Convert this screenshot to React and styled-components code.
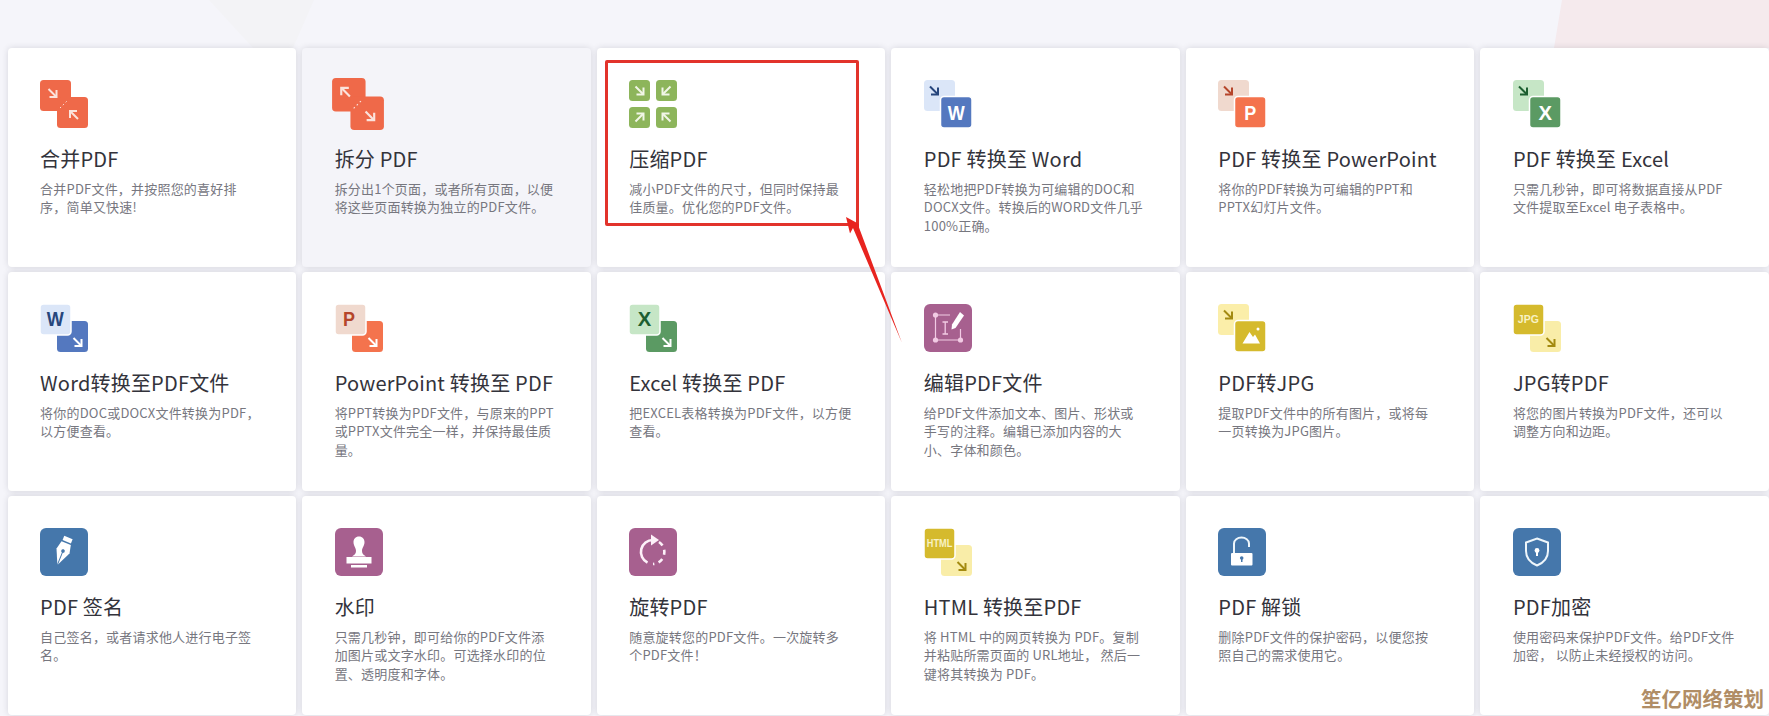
import styled, { createGlobalStyle } from "styled-components";

const GlobalStyle = createGlobalStyle`
  html, body {
    margin: 0;
    padding: 0;
    background: #f5f5fa;
  }
`;

const Arrow = ({ x, y, rot = 0, color = "#fff", size = 1 }) => (
  <g
    transform={`translate(${x} ${y}) rotate(${rot}) scale(${size})`}
    fill="none"
    stroke={color}
    strokeWidth="2"
  >
    <path d="M-4 -4L3.5 3.5" />
    <path d="M4 -3V4H-3" />
  </g>
);

const Square = ({ x, y, size = 31, color, outline }) => (
  <rect
    x={x}
    y={y}
    width={size}
    height={size}
    rx="3.5"
    fill={color}
    stroke={outline ? "#fff" : "none"}
    strokeWidth={outline ? 1.5 : 0}
  />
);

// the letters on the icons are narrower than any installed bold, so squeeze them
const Letter = ({ x, y, size = 20, width, color = "#fff", children }) => (
  <text
    x={x}
    y={y}
    textAnchor="middle"
    fontFamily="'Liberation Sans', sans-serif"
    fontWeight="700"
    fontSize={size}
    fill={color}
    textLength={width}
    lengthAdjust="spacingAndGlyphs"
  >
    {children}
  </text>
);

const Glyph = ({ children }) => (
  <svg width="48" height="48" viewBox="0 0 48 48">
    {children}
  </svg>
);

const MergeIcon = () => (
  <Glyph>
    <Square x={0} y={0} color="#ef6949" />
    <Square x={17} y={17} color="#ef6949" />
    <Arrow x={12.5} y={13} color="#fbe3dc" />
    <Arrow x={34} y={35} rot={180} color="#fbe3dc" />
    <path d="M20 28L28 20" stroke="#fbe3dc" strokeWidth="1" strokeDasharray="1.5 2.5" />
  </Glyph>
);

const SplitIcon = () => (
  <Glyph>
    <Square x={0} y={0} color="#ef6949" />
    <Square x={17} y={17} color="#ef6949" />
    <Arrow x={12.5} y={13} rot={180} color="#fbe3dc" />
    <Arrow x={35} y={35} color="#fbe3dc" />
    <path d="M20 28L28 20" stroke="#fbe3dc" strokeWidth="1" strokeDasharray="1.5 2.5" />
  </Glyph>
);

const CompressIcon = () => (
  <Glyph>
    <Square x={0} y={0} size={21} color="#8db55b" />
    <Square x={27} y={0} size={21} color="#8db55b" />
    <Square x={0} y={27} size={21} color="#8db55b" />
    <Square x={27} y={27} size={21} color="#8db55b" />
    <Arrow x={10.5} y={10.5} color="#f1f6e7" />
    <Arrow x={37.5} y={10.5} rot={90} color="#f1f6e7" />
    <Arrow x={10.5} y={37.5} rot={-90} color="#f1f6e7" />
    <Arrow x={37.5} y={37.5} rot={180} color="#f1f6e7" />
  </Glyph>
);

// light page with an arrow behind, solid page with a mark in front
const ToIcon = ({ light, dark, ink, children }) => (
  <Glyph>
    <Square x={0} y={0} color={light} />
    <Arrow x={10} y={10.5} color={ink} />
    <Square x={16.5} y={16.5} size={31.5} color={dark} outline />
    {children}
  </Glyph>
);

// solid page with an arrow behind, light or solid page with a mark in front
const FromIcon = ({ back, front, ink, children }) => (
  <Glyph>
    <Square x={17} y={17} color={back} />
    <Arrow x={37.5} y={38} color={ink} />
    <Square x={0} y={0} color={front} outline />
    {children}
  </Glyph>
);

const EditIcon = () => (
  <Glyph>
    <rect width="48" height="48" rx="6" fill="#a7608f" />
    <path d="M11.5 11H26M11.5 11V36H36.5V25" fill="none" stroke="#f2cbe4" strokeWidth="1.2" />
    <circle cx="11.5" cy="11" r="2.6" fill="#f2cbe4" />
    <circle cx="11.5" cy="36" r="2.6" fill="#f2cbe4" />
    <circle cx="36.5" cy="36" r="2.6" fill="#f2cbe4" />
    <path d="M18.5 18H24M18.5 30H24M21.2 18V30" fill="none" stroke="#f2cbe4" strokeWidth="1.3" />
    <path d="M36 8L40 11.5L31.5 24L27.5 25.5L28 20.5Z" fill="#fff" />
  </Glyph>
);

const SignIcon = () => (
  <Glyph>
    <rect width="48" height="48" rx="6" fill="#4577ab" />
    <g transform="translate(23 23) rotate(22)">
      <path d="M-4.5 -14.5H4.5V-10H-4.5Z" fill="#fff" />
      <path d="M-5 -8.5H5L7 0L0 15L-7 0Z" fill="#fff" />
      <path d="M0 15V1" stroke="#4577ab" strokeWidth="1" />
      <circle cx="0" cy="0" r="1.8" fill="#4577ab" />
    </g>
  </Glyph>
);

const StampIcon = () => (
  <Glyph>
    <rect width="48" height="48" rx="6" fill="#a7608f" />
    <path
      d="M24 8.5C27.5 8.5 29.5 11 29.5 14C29.5 18 27 19.5 27 23C27 25.5 28.5 27 31 28.5H17C19.5 27 21 25.5 21 23C21 19.5 18.5 18 18.5 14C18.5 11 20.5 8.5 24 8.5Z"
      fill="#fff"
    />
    <rect x="11.5" y="29" width="25" height="6.5" fill="#fff" />
    <rect x="16" y="37" width="16" height="2.5" fill="#fff" />
  </Glyph>
);

const RotateIcon = () => (
  <Glyph>
    <rect width="48" height="48" rx="6" fill="#a7608f" />
    <path
      d="M24 12A12 12 0 0 0 18.5 34.7"
      fill="none"
      stroke="#fdf1f9"
      strokeWidth="2.6"
    />
    <path
      d="M30 14A12 12 0 0 1 24 36"
      fill="none"
      stroke="#fdf1f9"
      strokeWidth="2.6"
      strokeDasharray="5 4.5"
    />
    <path d="M22 6.5L30 12L22 17.5Z" fill="#fdf1f9" />
  </Glyph>
);

const UnlockIcon = () => (
  <Glyph>
    <rect width="48" height="48" rx="6" fill="#4577ab" />
    <path
      d="M16 25V15.5C16 12 19.5 9.5 23.5 9.5C27.5 9.5 31 12 31 15.5V19"
      fill="none"
      stroke="#eef6fb"
      strokeWidth="2"
    />
    <rect x="13" y="25" width="21.5" height="12.5" rx="1" fill="#fff" />
    <circle cx="23.7" cy="30" r="1.8" fill="#4577ab" />
    <rect x="23" y="30" width="1.5" height="4" fill="#4577ab" />
  </Glyph>
);

const ShieldIcon = () => (
  <Glyph>
    <rect width="48" height="48" rx="6" fill="#4577ab" />
    <path
      d="M24 10.5L35 14.5V23C35 30 30 35 24 37.5C18 35 13 30 13 23V14.5Z"
      fill="none"
      stroke="#eef6fb"
      strokeWidth="2"
    />
    <circle cx="24" cy="22.5" r="2.4" fill="#fff" />
    <rect x="23" y="23" width="2" height="5" fill="#fff" />
  </Glyph>
);

const Mountains = () => (
  <>
    <path d="M24.5 39.5L31.5 28L35 33L37 30.5L42 39.5Z" fill="#fff" />
    <circle cx="40" cy="25" r="1.5" fill="#fff" />
  </>
);

const tools = [
  {
    icon: <MergeIcon />,
    title: "合并PDF",
    lines: ["合并PDF文件，并按照您的喜好排", "序，简单又快速!"],
  },
  {
    icon: <SplitIcon />,
    title: "拆分 PDF",
    lines: ["拆分出1个页面，或者所有页面，以便", "将这些页面转换为独立的PDF文件。"],
    active: true,
  },
  {
    icon: <CompressIcon />,
    title: "压缩PDF",
    lines: ["减小PDF文件的尺寸，但同时保持最", "佳质量。优化您的PDF文件。"],
  },
  {
    icon: (
      <ToIcon light="#dbe6f8" dark="#5478bf" ink="#27467c">
        <Letter x={32.2} y={39.7} size={21} width={17}>W</Letter>
      </ToIcon>
    ),
    title: "PDF 转换至 Word",
    lines: ["轻松地把PDF转换为可编辑的DOC和", "DOCX文件。转换后的WORD文件几乎", "100%正确。"],
  },
  {
    icon: (
      <ToIcon light="#f0d9ce" dark="#f4734d" ink="#b5452a">
        <Letter x={32.2} y={39.7} width={12}>P</Letter>
      </ToIcon>
    ),
    title: "PDF 转换至 PowerPoint",
    lines: ["将你的PDF转换为可编辑的PPT和", "PPTX幻灯片文件。"],
  },
  {
    icon: (
      <ToIcon light="#c6e6c6" dark="#5b9a63" ink="#1d5f30">
        <Letter x={32.2} y={39.7} width={13.5}>X</Letter>
      </ToIcon>
    ),
    title: "PDF 转换至 Excel",
    lines: ["只需几秒钟，即可将数据直接从PDF", "文件提取至Excel 电子表格中。"],
  },
  {
    icon: (
      <FromIcon back="#5478bf" front="#dbe6f8" ink="#fff">
        <Letter x={15.3} y={22.2} size={21} width={17} color="#27467c">W</Letter>
      </FromIcon>
    ),
    title: "Word转换至PDF文件",
    lines: ["将你的DOC或DOCX文件转换为PDF，", "以方便查看。"],
  },
  {
    icon: (
      <FromIcon back="#f4734d" front="#f0d9ce" ink="#fff">
        <Letter x={14} y={22.2} width={12} color="#b5452a">P</Letter>
      </FromIcon>
    ),
    title: "PowerPoint 转换至 PDF",
    lines: ["将PPT转换为PDF文件，与原来的PPT", "或PPTX文件完全一样，并保持最佳质", "量。"],
  },
  {
    icon: (
      <FromIcon back="#5b9a63" front="#c6e6c6" ink="#fff">
        <Letter x={15.5} y={22.2} width={13.5} color="#1d5f30">X</Letter>
      </FromIcon>
    ),
    title: "Excel 转换至 PDF",
    lines: ["把EXCEL表格转换为PDF文件，以方便", "查看。"],
  },
  {
    icon: <EditIcon />,
    title: "编辑PDF文件",
    lines: ["给PDF文件添加文本、图片、形状或", "手写的注释。编辑已添加内容的大", "小、字体和颜色。"],
  },
  {
    icon: (
      <ToIcon light="#fbeea9" dark="#d5ba2d" ink="#a38a10">
        <Mountains />
      </ToIcon>
    ),
    title: "PDF转JPG",
    lines: ["提取PDF文件中的所有图片，或将每", "一页转换为JPG图片。"],
  },
  {
    icon: (
      <FromIcon back="#f9eda8" front="#d5ba2d" ink="#a38a10">
        <Letter x={15.3} y={19} size={11} width={21} color="#f8f2c4">JPG</Letter>
      </FromIcon>
    ),
    title: "JPG转PDF",
    lines: ["将您的图片转换为PDF文件，还可以", "调整方向和边距。"],
  },
  {
    icon: <SignIcon />,
    title: "PDF 签名",
    lines: ["自己签名，或者请求他人进行电子签", "名。"],
  },
  {
    icon: <StampIcon />,
    title: "水印",
    lines: ["只需几秒钟，即可给你的PDF文件添", "加图片或文字水印。可选择水印的位", "置、透明度和字体。"],
  },
  {
    icon: <RotateIcon />,
    title: "旋转PDF",
    lines: ["随意旋转您的PDF文件。一次旋转多", "个PDF文件！"],
  },
  {
    icon: (
      <FromIcon back="#f9eda8" front="#d5ba2d" ink="#a38a10">
        <Letter x={15.5} y={19} size={10.5} width={25.5} color="#f8f2c4">HTML</Letter>
      </FromIcon>
    ),
    title: "HTML 转换至PDF",
    lines: ["将 HTML 中的网页转换为 PDF。复制", "并粘贴所需页面的 URL地址， 然后一", "键将其转换为 PDF。"],
  },
  {
    icon: <UnlockIcon />,
    title: "PDF 解锁",
    lines: ["删除PDF文件的保护密码，以便您按", "照自己的需求使用它。"],
  },
  {
    icon: <ShieldIcon />,
    title: "PDF加密",
    lines: ["使用密码来保护PDF文件。给PDF文件", "加密， 以防止未经授权的访问。"],
  },
];

const App = () => (
  <Page>
    <GlobalStyle />
    <Grid>
      {tools.map((tool) => (
        <Card key={tool.title} $active={tool.active}>
          <IconBox $active={tool.active}>{tool.icon}</IconBox>
          <Title>{tool.title}</Title>
          <Description>
            {tool.lines.map((line) => (
              <Line key={line}>{line}</Line>
            ))}
          </Description>
        </Card>
      ))}
    </Grid>
    <Highlight />
    <Pointer viewBox="0 0 60 130" width="60" height="130">
      <path d="M3 3L7 19.5L10 14L59 129L16 13.5L16 10Z" fill="#e8241f" />
    </Pointer>
    <Watermark>笙亿网络策划</Watermark>
  </Page>
);

export default App;

const Page = styled.div`
  position: relative;
  width: 1769px;
  height: 716px;
  overflow: hidden;
  box-sizing: border-box;
  padding: 48px 0 0 7.6px;
  background: #f5f5fa;
  font-family: "Noto Sans CJK SC", "Noto Sans", sans-serif;

  &::before {
    content: "";
    position: absolute;
    top: 0;
    right: 0;
    width: 215px;
    height: 48px;
    background: #f5eaed;
    clip-path: polygon(8px 0, 100% 0, 100% 100%, 0 100%);
  }

  &::after {
    content: "";
    position: absolute;
    top: 0;
    left: 209px;
    width: 105px;
    height: 48px;
    background: #f3f3f6;
    clip-path: polygon(0 0, 100% 0, 80% 100%, 42% 100%);
  }
`;

const Grid = styled.div`
  position: relative;
  z-index: 1;
  display: grid;
  grid-template-columns: repeat(6, 1fr);
  grid-auto-rows: 219px;
  column-gap: 6px;
  row-gap: 5px;
`;

const Card = styled.div`
  box-sizing: border-box;
  min-width: 0;
  padding: 32px 16px 0 32.5px;
  border-radius: 4px;
  background: ${(props) => (props.$active ? "#f4f4f9" : "#fff")};
  box-shadow: 0 0 6px rgba(40, 40, 60, 0.15);
`;

const IconBox = styled.div`
  width: 48px;
  height: 48px;
  transform-origin: center;
  transform: ${(props) => (props.$active ? "translateX(-1px) scale(1.08)" : "none")};

  svg {
    display: block;
    overflow: visible;
  }
`;

const Title = styled.h3`
  margin: 17px 0 7px;
  font-size: 20px;
  font-weight: 400;
  line-height: 28px;
  letter-spacing: 0.2px;
  color: #33333b;
  white-space: nowrap;
`;

const Description = styled.p`
  margin: 0;
  font-size: 13px;
  line-height: 18.3px;
  letter-spacing: 0.2px;
  color: #77777f;
`;

const Line = styled.span`
  display: block;
  white-space: nowrap;
`;

const Highlight = styled.div`
  position: absolute;
  z-index: 2;
  top: 60px;
  left: 604.5px;
  width: 254px;
  height: 166px;
  box-sizing: border-box;
  border: 3px solid #e2332b;
  border-radius: 2px;
`;

const Pointer = styled.svg`
  position: absolute;
  z-index: 3;
  top: 214px;
  left: 843px;
`;

const Watermark = styled.div`
  position: absolute;
  z-index: 3;
  right: 5px;
  bottom: 6px;
  font-size: 20.5px;
  font-weight: 700;
  line-height: 24px;
  color: #b08d66;
`;
